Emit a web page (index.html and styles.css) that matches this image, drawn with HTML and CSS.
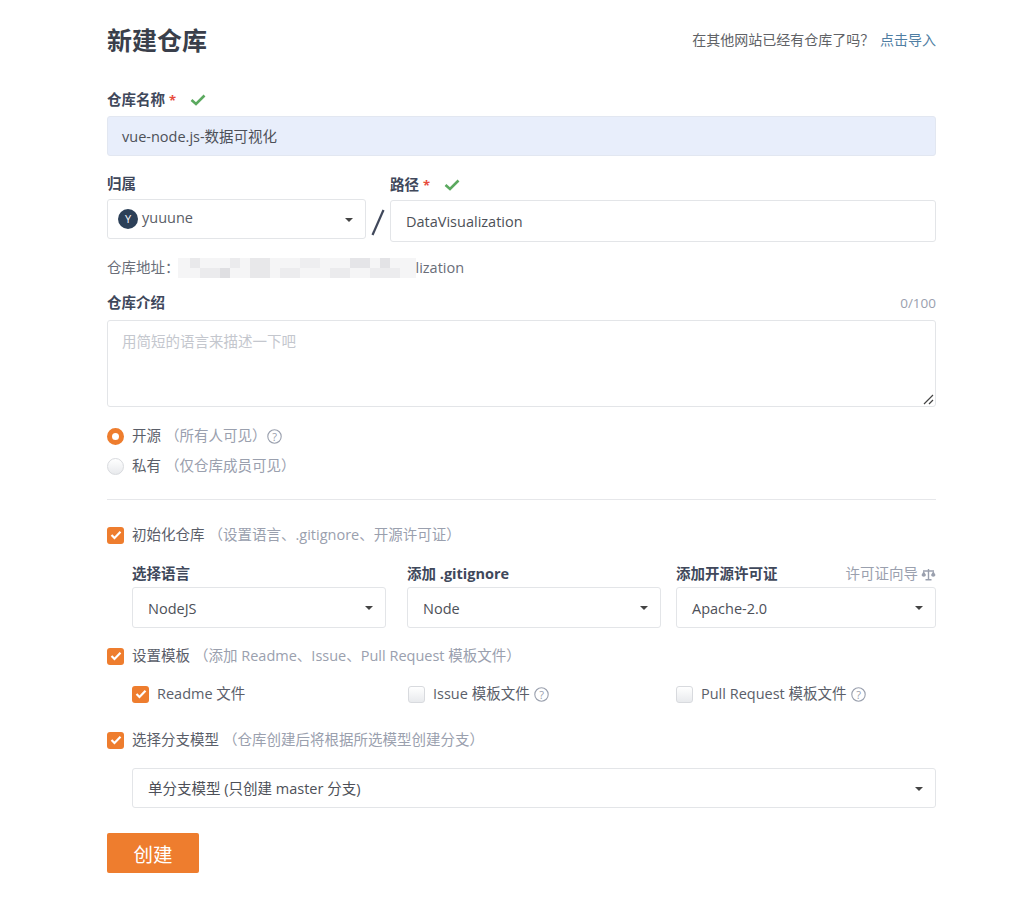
FILE: index.html
```html
<!DOCTYPE html>
<html lang="zh-CN">
<head>
<meta charset="UTF-8">
<meta name="viewport" content="width=device-width, initial-scale=1.0">
<title>新建仓库</title>
<link rel="stylesheet" href="styles.css">
</head>
<body>

<div class="page">
  <div class="page-head">
    <h1>新建仓库</h1>
    <div class="import-tip">在其他网站已经有仓库了吗？ <a href="#">点击导入</a></div>
  </div>

  <div class="label-row name-label">
    <label>仓库名称</label><span class="req">*</span>
    <svg class="ok" width="16" height="12" viewBox="0 0 16 12"><path d="M1.5 6 L6 10 L14.5 1.5" fill="none" stroke="#5ba95f" stroke-width="2.6"/></svg>
  </div>
  <div class="field filled">vue-node.js-数据可视化</div>

  <div class="path-row">
    <div class="owner-col">
      <div class="label-row"><label>归属</label></div>
      <div class="field select owner">
        <span class="avatar">Y</span><span class="owner-name">yuuune</span>
        <i class="caret"></i>
      </div>
    </div>
    <svg class="slash" width="24" height="30" viewBox="0 0 24 30"><path d="M17.500 3 L6.500 28" stroke="#40485b" stroke-width="2.200"/></svg>
    <div class="path-col">
      <div class="label-row">
        <label>路径</label><span class="req">*</span>
        <svg class="ok" width="16" height="12" viewBox="0 0 16 12"><path d="M1.5 6 L6 10 L14.500 1.500" fill="none" stroke="#5ba95f" stroke-width="2.6"/></svg>
      </div>
      <div class="field tall">DataVisualization</div>
    </div>
  </div>

  <div class="address">
    <span>仓库地址：</span>
    <svg class="mosaic" width="238" height="20" viewBox="0 0 238 20">
      <rect width="238" height="20" fill="#f5f5f6"/>
      <rect x="12" width="10" height="10" fill="#e9e9eb"/>
      <rect x="22" y="10" width="20" height="10" fill="#ebebed"/>
      <rect x="42" y="10" width="10" height="10" fill="#dfdfe2"/>
      <rect x="52" width="10" height="10" fill="#ebebed"/>
      <rect x="72" width="20" height="20" fill="#e8e8ea"/>
      <rect x="102" y="10" width="20" height="10" fill="#ececee"/>
      <rect x="122" width="20" height="10" fill="#eeeef0"/>
      <rect x="152" y="10" width="20" height="10" fill="#ebebed"/>
      <rect x="172" width="20" height="10" fill="#e5e5e8"/>
      <rect x="202" width="10" height="10" fill="#e3e3e6"/>
      <rect x="192" y="10" width="30" height="10" fill="#ececee"/>
    </svg>
    <span>lization</span>
  </div>

  <div class="label-row desc-label">
    <label>仓库介绍</label>
    <span class="counter">0/100</span>
  </div>
  <div class="textarea">
    用简短的语言来描述一下吧
    <svg class="grip" width="11" height="11" viewBox="0 0 11 11"><path d="M1 10 L10 1 M6 10 L10 6" stroke="#444" stroke-width="1.200"/></svg>
  </div>

  <div class="option first-radio">
    <span class="radio on"></span><span class="opt-text">开源</span><span class="hint">（所有人可见）</span>
    <svg class="help" width="15" height="15" viewBox="0 0 15 15"><circle cx="7.500" cy="7.500" r="6.700" fill="none" stroke="#9aa0ae" stroke-width="1.100"/><text x="7.500" y="11.500" class="help-mark">?</text></svg>
  </div>
  <div class="option second-radio">
    <span class="radio"></span><span class="opt-text">私有</span><span class="hint">（仅仓库成员可见）</span>
  </div>

  <div class="divider"></div>

  <div class="option">
    <span class="check on"><svg width="12" height="10" viewBox="0 0 12 10"><path d="M1.500 5 L4.500 8 L10.500 1.800" fill="none" stroke="#fff" stroke-width="2.200"/></svg></span>
    <span class="opt-text">初始化仓库</span><span class="hint">（设置语言、.gitignore、开源许可证）</span>
  </div>

  <div class="init-grid">
    <div>
      <div class="col-label"><label>选择语言</label></div>
      <div class="field select">NodeJS<i class="caret"></i></div>
    </div>
    <div>
      <div class="col-label"><label>添加 .gitignore</label></div>
      <div class="field select">Node<i class="caret"></i></div>
    </div>
    <div>
      <div class="col-label">
        <label>添加开源许可证</label>
        <span class="wizard">许可证向导
          <svg width="15" height="13" viewBox="0 0 15 13"><path d="M7.500 1 V11.500 M4.500 11.700 H10.500 M2 3 H13" fill="none" stroke="#9aa0ae" stroke-width="1.400"/><path d="M0.500 7 A2.300 2.300 0 0 0 5 7 L2.700 3 Z M10 7 A2.300 2.300 0 0 0 14.500 7 L12.300 3 Z" fill="#9aa0ae"/></svg>
        </span>
      </div>
      <div class="field select">Apache-2.0<i class="caret"></i></div>
    </div>
  </div>

  <div class="option tpl-option">
    <span class="check on"><svg width="12" height="10" viewBox="0 0 12 10"><path d="M1.500 5 L4.500 8 L10.500 1.800" fill="none" stroke="#fff" stroke-width="2.200"/></svg></span>
    <span class="opt-text">设置模板</span><span class="hint">（添加 Readme、Issue、Pull Request 模板文件）</span>
  </div>

  <div class="tpl-grid">
    <div class="option">
      <span class="check on"><svg width="12" height="10" viewBox="0 0 12 10"><path d="M1.500 5 L4.500 8 L10.500 1.800" fill="none" stroke="#fff" stroke-width="2.200"/></svg></span>
      <span class="opt-text">Readme 文件</span>
    </div>
    <div class="option">
      <span class="check"></span><span class="opt-text">Issue 模板文件</span>
      <svg class="help small" width="15" height="15" viewBox="0 0 15 15"><circle cx="7.500" cy="7.500" r="6.700" fill="none" stroke="#9aa0ae" stroke-width="1.100"/><text x="7.500" y="11.500" class="help-mark">?</text></svg>
    </div>
    <div class="option">
      <span class="check"></span><span class="opt-text">Pull Request 模板文件</span>
      <svg class="help small" width="15" height="15" viewBox="0 0 15 15"><circle cx="7.500" cy="7.500" r="6.700" fill="none" stroke="#9aa0ae" stroke-width="1.100"/><text x="7.500" y="11.500" class="help-mark">?</text></svg>
    </div>
  </div>

  <div class="option branch-option">
    <span class="check on"><svg width="12" height="10" viewBox="0 0 12 10"><path d="M1.500 5 L4.500 8 L10.500 1.800" fill="none" stroke="#fff" stroke-width="2.200"/></svg></span>
    <span class="opt-text">选择分支模型</span><span class="hint">（仓库创建后将根据所选模型创建分支）</span>
  </div>

  <div class="field select branch">单分支模型 (只创建 master 分支)<i class="caret"></i></div>

  <button class="submit">创建</button>
</div>

</body>
</html>
```

FILE: styles.css
```css
:root {
  --text: #40485b;
  --muted: #9aa0ae;
  --border: #e3e5e8;
  --orange: #ee7d2e;
}
body {
  margin: 0;
  padding: 0 88px 0 107px;
  background: #fff;
  color: var(--text);
  font-family: "Open Sans", "Noto Sans CJK SC", sans-serif;
  font-size: 14.500px;
  line-height: 20px;
}
.page {
  height: 899px;
  overflow: hidden;
}
.page-head {
  display: flex;
  justify-content: space-between;
  align-items: center;
  height: 40px;
  padding-top: 20px;
}
h1 {
  margin: 0;
  font-size: 25px;
  line-height: 40px;
  font-weight: 700;
  color: #3a3f4b;
}
.import-tip {
  color: #606266;
  font-size: 14px;
}
.import-tip a {
  color: #4f7ea3;
  text-decoration: none;
  margin-left: 2px;
}
label {
  font-weight: 700;
}
.label-row {
  display: flex;
  align-items: center;
  height: 20px;
}
.name-label {
  margin-top: 30px;
  margin-bottom: 6px;
}
.req {
  color: #e74c3c;
  margin-left: 4px;
  font-size: 13px;
  font-weight: 700;
}
.ok {
  margin-left: 14px;
}
.field {
  position: relative;
  box-sizing: border-box;
  height: 40px;
  line-height: 40px;
  padding: 0 15px;
  border: 1px solid var(--border);
  border-radius: 3px;
  color: #4d5058;
  background: #fff;
}
.filled {
  padding-left: 14px;
  background: #e8eefb;
  border-color: #e2e7f1;
}
.tall {
  height: 42px;
  line-height: 42px;
}
.caret {
  position: absolute;
  right: 12px;
  top: 18px;
  border: 4px solid transparent;
  border-top: 4px solid #444;
  border-bottom: 0;
}
.path-row {
  display: flex;
  margin-top: 18px;
}
.owner-col {
  width: 259px;
}
.owner-col .label-row {
  margin-bottom: 5px;
}
.owner {
  display: flex;
  align-items: center;
  padding-left: 10px;
}
.avatar {
  width: 20px;
  height: 20px;
  border-radius: 50%;
  background: #2c4058;
  color: #fff;
  font-size: 11px;
  line-height: 20px;
  text-align: center;
  margin-right: 4px;
}
.owner-name {
  position: relative;
  top: -1px;
  color: #5a5d66;
}
.slash {
  width: 24px;
  height: 30px;
  margin-top: 33px;
  flex: none;
}
.path-col {
  flex: 1;
}
.path-col .label-row {
  margin-top: 1px;
  margin-bottom: 5px;
}
.address {
  display: flex;
  align-items: center;
  margin-top: 16px;
  height: 20px;
  color: #6a6e79;
}
.mosaic {
  margin-left: -2px;
  flex: none;
}
.desc-label {
  justify-content: space-between;
  margin-top: 15px;
  margin-bottom: 7px;
}
.counter {
  color: var(--muted);
  font-size: 13.500px;
}
.textarea {
  position: relative;
  box-sizing: border-box;
  height: 87px;
  padding: 11px 14px;
  border: 1px solid var(--border);
  border-radius: 3px;
  color: #c4c7ce;
}
.grip {
  position: absolute;
  right: 1px;
  bottom: 1px;
}
.option {
  display: flex;
  align-items: center;
  height: 20px;
}
.first-radio {
  margin-top: 19px;
}
.second-radio {
  margin-top: 10px;
}
.radio {
  box-sizing: border-box;
  width: 17px;
  height: 17px;
  border-radius: 50%;
  border: 1px solid #d8dade;
  background: linear-gradient(#fff, #e8eaed);
  margin-right: 8px;
  flex: none;
}
.radio.on {
  border: 5px solid var(--orange);
  background: #fff;
}
.check {
  box-sizing: border-box;
  display: flex;
  align-items: center;
  justify-content: center;
  width: 17px;
  height: 17px;
  border-radius: 3px;
  border: 1px solid #d8dade;
  background: linear-gradient(#fff, #e8eaed);
  margin-right: 8px;
  flex: none;
}
.check.on {
  border: 0;
  background: var(--orange);
}
.opt-text {
  color: #5a5e69;
}
.hint {
  color: var(--muted);
  margin-left: 4px;
}
.help {
  margin-left: 0;
  flex: none;
}
.help.small {
  margin-left: 4px;
}
.help-mark {
  font-size: 11px;
  text-anchor: middle;
  fill: var(--muted);
}
.divider {
  height: 1px;
  background: #e6e7ea;
  margin-top: 23px;
  margin-bottom: 25px;
}
.init-grid {
  display: grid;
  grid-template-columns: 275px 269px 260px;
  margin-top: 19px;
  margin-left: 25px;
}
.init-grid > div:nth-child(1) {
  padding-right: 21px;
}
.init-grid > div:nth-child(2) {
  padding-right: 15px;
}
.init-grid .field {
  height: 41px;
  line-height: 41px;
}
.col-label {
  display: flex;
  justify-content: space-between;
  align-items: center;
  height: 20px;
  margin-bottom: 3px;
}
.wizard {
  display: flex;
  align-items: center;
  gap: 3px;
  color: var(--muted);
}
.tpl-option {
  margin-top: 18px;
}
.tpl-grid {
  display: grid;
  grid-template-columns: 276px 268px 1fr;
  margin-top: 18px;
  margin-left: 25px;
}
.branch-option {
  margin-top: 26px;
}
.branch {
  margin-top: 18px;
  margin-left: 25px;
}
.submit {
  display: block;
  width: 92px;
  height: 40px;
  margin-top: 25px;
  border: 0;
  border-radius: 2px;
  background: var(--orange);
  color: #fff;
  font-family: inherit;
  font-size: 19.500px;
  cursor: pointer;
}
```
